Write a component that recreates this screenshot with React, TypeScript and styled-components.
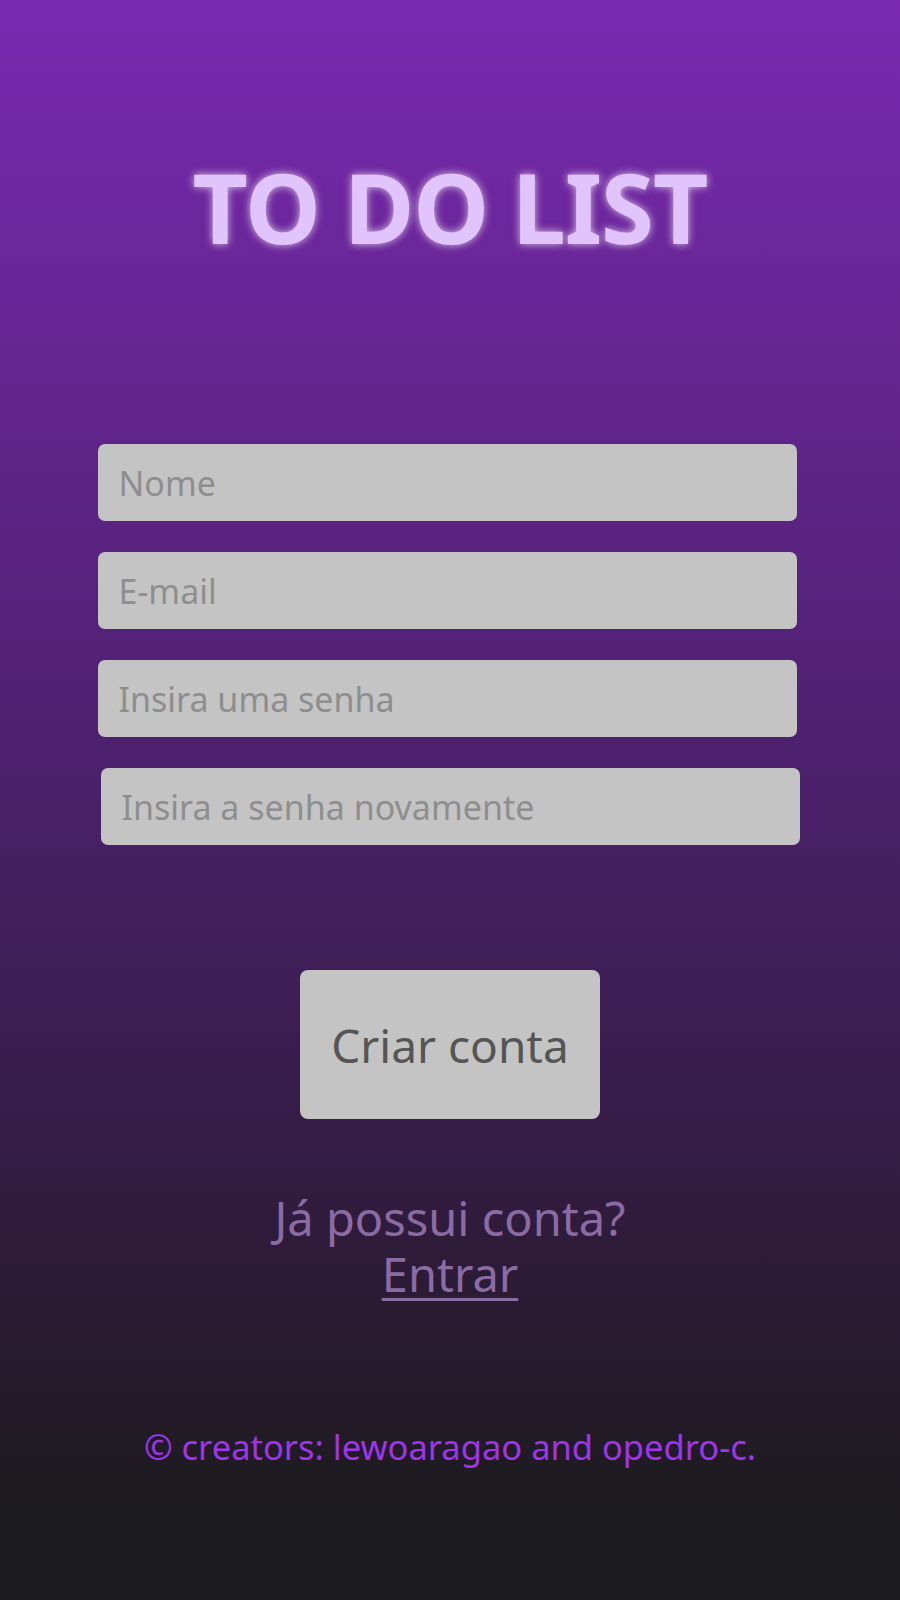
import { createGlobalStyle } from 'styled-components';
import styled from 'styled-components';

const GlobalStyle = createGlobalStyle`
  * {
    box-sizing: border-box;
  }

  body {
    margin: 0;
    font-family: 'Noto Sans', 'Open Sans', sans-serif;
    background: #1b1b1d;
  }
`;

const PageStyled = styled.main`
  min-height: 100vh;
  display: flex;
  flex-direction: column;
  align-items: center;
  background: linear-gradient(to bottom, #7a29b1 0%, #4a2069 50%, #2c1b36 80%, #1c1b1d 95%);
`;

const TitleStyled = styled.h1`
  margin: 153px 0 0;
  height: 108px;
  line-height: 108px;
  font-size: 96px;
  font-weight: 700;
  letter-spacing: -1px;
  color: #e2c4fd;
  text-shadow: 0 0 8px rgba(255, 255, 255, 0.75);
`;

const FormStyled = styled.form`
  width: 700px;
  margin-top: 183px;
  display: flex;
  flex-direction: column;
  align-items: center;
  gap: 31px;
`;

const InputStyled = styled.input<{ $shift?: number }>`
  width: 699px;
  height: 77px;
  padding: 0 21px;
  border: none;
  border-radius: 7px;
  background: #c4c4c4;
  font-family: inherit;
  font-size: 34px;
  color: #444;
  outline: none;
  transform: translateX(${(props) => props.$shift || 0}px);

  &::placeholder {
    color: #8e8e8e;
  }
`;

const SubmitStyled = styled.button`
  width: 300px;
  height: 149px;
  margin-top: 94px;
  border: none;
  border-radius: 8px;
  background: #c4c4c4;
  font-family: inherit;
  font-size: 46px;
  color: #555;
  cursor: pointer;
`;

const LoginBoxStyled = styled.div`
  margin-top: 71px;
  display: flex;
  flex-direction: column;
  align-items: center;
  font-size: 47px;
  line-height: 56px;
  color: #8b6ba4;

  a {
    color: inherit;
    text-decoration-thickness: 3px;
    text-underline-offset: 6px;
  }
`;

const FooterStyled = styled.footer`
  margin-top: 121px;
  font-size: 34.5px;
  color: #a034ea;
`;

const App = () => {
  return (
    <>
      <GlobalStyle />
      <PageStyled>
        <TitleStyled>TO DO LIST</TitleStyled>
        <FormStyled onSubmit={(event) => event.preventDefault()}>
          <InputStyled type="text" placeholder="Nome" $shift={-3} />
          <InputStyled type="email" placeholder="E-mail" $shift={-3} />
          <InputStyled type="password" placeholder="Insira uma senha" $shift={-3} />
          <InputStyled type="password" placeholder="Insira a senha novamente" />
          <SubmitStyled type="submit">Criar conta</SubmitStyled>
        </FormStyled>
        <LoginBoxStyled>
          <span>Já possui conta?</span>
          <a href="#">Entrar</a>
        </LoginBoxStyled>
        <FooterStyled>© creators: lewoaragao and opedro-c.</FooterStyled>
      </PageStyled>
    </>
  );
};

export default App;
